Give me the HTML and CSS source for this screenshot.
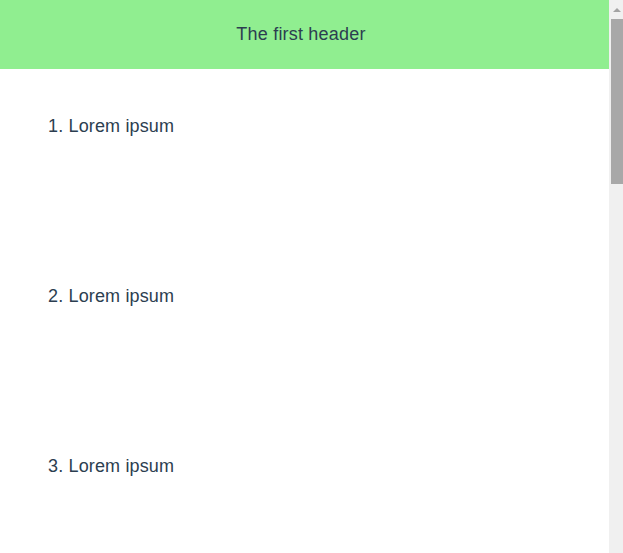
FILE: index.html
```html
<!DOCTYPE html>
<html lang="en">
<head>
<meta charset="utf-8">
<title>Headers</title>
<link rel="stylesheet" href="styles.css">
</head>
<body>
  <div class="viewport">
    <main class="content">
      <header class="page-header">The first header</header>
      <ol class="items">
        <li>Lorem ipsum</li>
        <li>Lorem ipsum</li>
        <li>Lorem ipsum</li>
      </ol>
    </main>
    <div class="scrollbar" aria-hidden="true">
      <div class="scroll-arrow"></div>
      <div class="scroll-thumb"></div>
    </div>
  </div>
</body>
</html>
```

FILE: styles.css
```css
html, body {
  margin: 0;
  height: 100%;
  overflow: hidden;
}
body {
  font-family: "Liberation Sans", Arial, sans-serif;
  font-size: 18px;
  color: #2c3e50;
  background: #fff;
  letter-spacing: 0.15px;
}
.viewport {
  display: flex;
  height: 100vh;
}
.content {
  flex: 1;
  min-width: 0;
  overflow: hidden;
}
.page-header {
  height: 68px;
  padding: 0 7px 1px 0;
  display: flex;
  align-items: center;
  justify-content: center;
  background: #90ee90;
  letter-spacing: 0.2px;
}
.items {
  margin: 0;
  padding: 47px 0 0 48px;
  list-style-position: inside;
}
.items li {
  line-height: 20px;
  margin-bottom: 150px;
}
.items li:last-child {
  margin-bottom: 0;
}
.scrollbar {
  width: 14px;
  flex: none;
  background: #f0f0f0;
  display: flex;
  flex-direction: column;
  align-items: flex-end;
}
.scroll-arrow {
  align-self: center;
  margin-top: 8px;
  width: 0;
  height: 0;
  border-left: 4px solid transparent;
  border-right: 4px solid transparent;
  border-bottom: 4px solid #a3a3a3;
  margin-left: 2px;
}
.scroll-thumb {
  margin-top: 7px;
  width: 12px;
  height: 165px;
  background: #a8a8a8;
}
```
